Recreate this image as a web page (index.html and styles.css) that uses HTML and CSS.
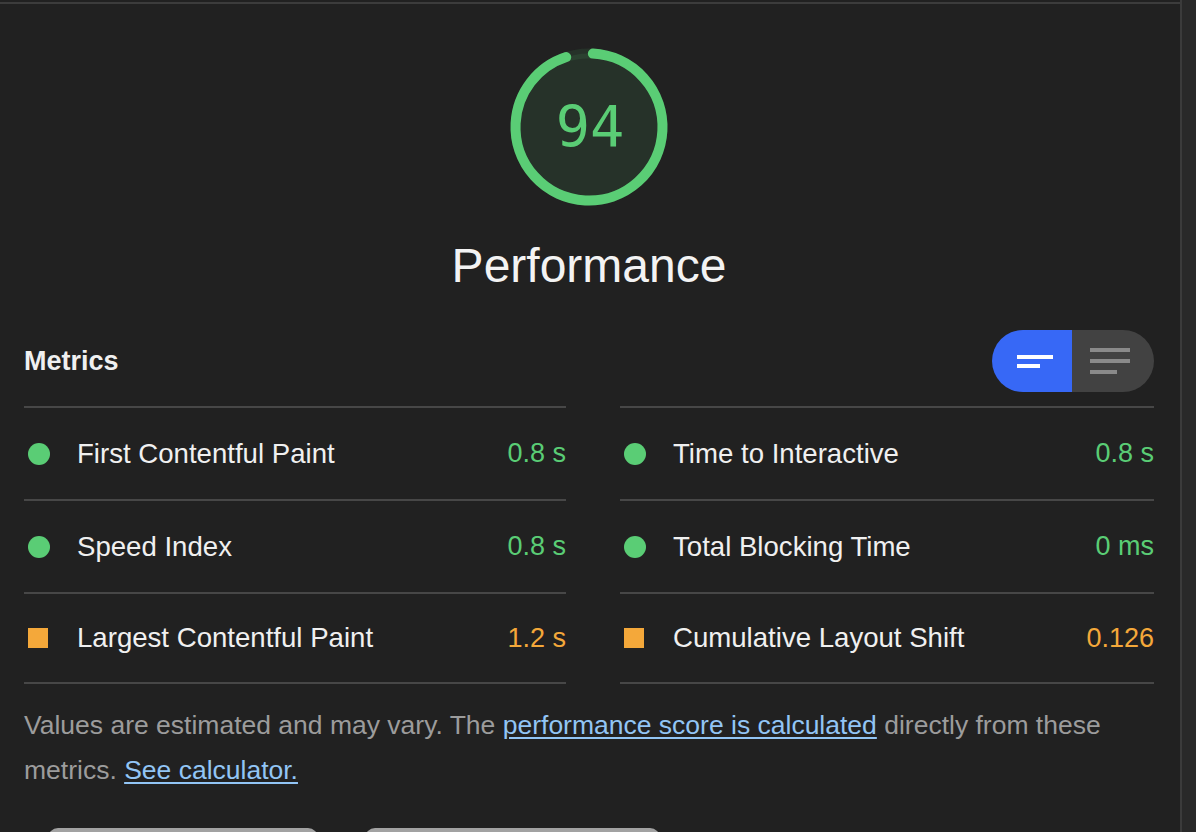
FILE: index.html
```html
<!DOCTYPE html>
<html lang="en">
<head>
<meta charset="utf-8">
<title>Performance</title>
<link rel="stylesheet" href="styles.css">
</head>
<body>
<div class="frame">
  <main class="panel">
    <div class="topline"></div>
    <div class="content">
      <section class="score">
        <svg class="gauge" width="160" height="160" viewBox="0 0 160 160">
          <circle class="gauge-base" cx="80" cy="80" r="73.5"></circle>
          <circle class="gauge-arc" cx="80" cy="80" r="73.5" stroke-dasharray="434.1 461.8" transform="rotate(-87 80 80)"></circle>
          <text class="gauge-num" x="81" y="80">94</text>
        </svg>
        <h1 class="score-title">Performance</h1>
      </section>

      <section class="metrics">
        <div class="metrics-head">
          <h2 class="metrics-title">Metrics</h2>
          <div class="toggle">
            <button class="toggle-btn on" aria-label="Collapse view">
              <svg width="36" height="13" viewBox="0 0 36 13"><rect x="0" y="0" width="36" height="4" fill="#ffffff"/><rect x="0" y="9" width="23" height="4" fill="#ffffff"/></svg>
            </button>
            <button class="toggle-btn off" aria-label="Expand view">
              <svg width="40" height="26" viewBox="0 0 40 26"><rect x="0" y="0" width="40" height="4" fill="#8a8a8a"/><rect x="0" y="11" width="40" height="4" fill="#8a8a8a"/><rect x="0" y="22" width="27" height="4" fill="#8a8a8a"/></svg>
            </button>
          </div>
        </div>

        <div class="grid">
          <div class="metric pass"><span class="ind"><i class="dot"></i></span><span class="label">First Contentful Paint</span><span class="val">0.8 s</span></div>
          <div class="metric pass"><span class="ind"><i class="dot"></i></span><span class="label">Time to Interactive</span><span class="val">0.8 s</span></div>
          <div class="metric pass"><span class="ind"><i class="dot"></i></span><span class="label">Speed Index</span><span class="val">0.8 s</span></div>
          <div class="metric pass"><span class="ind"><i class="dot"></i></span><span class="label">Total Blocking Time</span><span class="val">0 ms</span></div>
          <div class="metric avg"><span class="ind"><i class="sq"></i></span><span class="label">Largest Contentful Paint</span><span class="val">1.2 s</span></div>
          <div class="metric avg"><span class="ind"><i class="sq"></i></span><span class="label">Cumulative Layout Shift</span><span class="val">0.126</span></div>
        </div>

        <p class="note">Values are estimated and may vary. The <a href="#">performance score is calculated</a> directly from these metrics. <a href="#">See calculator.</a></p>

        <div class="buttons">
          <button class="btn btn-a" aria-label="View Treemap"></button>
          <button class="btn btn-b" aria-label="View Original Trace"></button>
        </div>
      </section>
    </div>
  </main>
  <aside class="strip"></aside>
</div>
</body>
</html>
```

FILE: styles.css
```css
html, body {
  margin: 0;
  padding: 0;
  background: #212121;
  overflow: hidden;
}

body {
  font-family: "Liberation Sans", Arial, Helvetica, sans-serif;
  color: #eeeeee;
}

.frame {
  display: flex;
  width: 1196px;
  height: 832px;
}

.panel {
  width: 1180px;
  border-right: 2px solid #3b3b3b;
  background: #212121;
}

.topline {
  margin-top: 2px;
  height: 2px;
  background: #3c3c3c;
}

.strip {
  flex: 1;
  background: #292929;
}

.content {
  padding: 0 26px 0 24px;
}

.score {
  display: flex;
  flex-direction: column;
  align-items: center;
  padding-top: 43px;
}

.gauge {
  display: block;
}

.gauge-base {
  fill: rgba(92, 205, 118, 0.1);
  stroke: rgba(92, 205, 118, 0.1);
  stroke-width: 10;
}

.gauge-arc {
  fill: none;
  stroke: #5acd75;
  stroke-width: 10;
  stroke-linecap: round;
}

.gauge-num {
  font-family: "DejaVu Sans Mono", "Liberation Mono", monospace;
  font-size: 57px;
  fill: #5acd75;
  text-anchor: middle;
  dominant-baseline: central;
}

.score-title {
  margin: 31px 0 0;
  font-size: 48px;
  line-height: 56px;
  font-weight: 400;
  color: #f3f3f3;
}

.metrics-head {
  display: flex;
  align-items: center;
  justify-content: space-between;
  height: 62px;
  margin-top: 36px;
  margin-bottom: 14px;
}

.metrics-title {
  margin: 0;
  font-size: 27px;
  line-height: 32px;
  font-weight: 700;
  color: #f0f0f0;
}

.toggle {
  display: flex;
  height: 62px;
  border-radius: 31px;
  overflow: hidden;
}

.toggle-btn {
  display: flex;
  align-items: center;
  justify-content: center;
  border: 0;
  padding: 0;
  margin: 0;
}

.toggle-btn.on {
  width: 80px;
  background: #3768f6;
  padding-left: 6px;
}

.toggle-btn.off {
  width: 82px;
  background: #424242;
  padding-right: 6px;
}

.grid {
  display: grid;
  grid-template-columns: 542px 534px;
  column-gap: 54px;
}

.metric {
  display: flex;
  align-items: center;
  height: 91px;
  border-top: 2px solid #474747;
  font-size: 27.6px;
}

.metric:nth-last-child(-n+2) {
  height: 88px;
  border-bottom: 2px solid #474747;
}

.ind {
  width: 22px;
  margin-left: 4px;
  display: flex;
  align-items: center;
}

.dot {
  display: block;
  width: 22px;
  height: 22px;
  border-radius: 50%;
  background: #5acd75;
}

.sq {
  display: block;
  width: 20px;
  height: 20px;
  background: #f4a83a;
}

.label {
  flex: 1;
  margin-left: 27px;
  color: #f0f0f0;
}

.val {
  text-align: right;
  font-size: 27px;
}

.pass .val {
  color: #5acd75;
}

.avg .val {
  color: #f4a83a;
}

.note {
  margin: 19px 0 0;
  font-size: 26.5px;
  line-height: 45px;
  color: #9c9c9c;
}

.note a {
  color: #92c5f5;
  text-decoration: underline;
  text-underline-offset: 3px;
}

.buttons {
  display: flex;
  gap: 47px;
  margin: 35px 0 0 24px;
}

.btn {
  height: 44px;
  border: 0;
  border-radius: 10px;
  background: #a2a2a2;
}

.btn-a {
  width: 270px;
}

.btn-b {
  width: 295px;
}
```
